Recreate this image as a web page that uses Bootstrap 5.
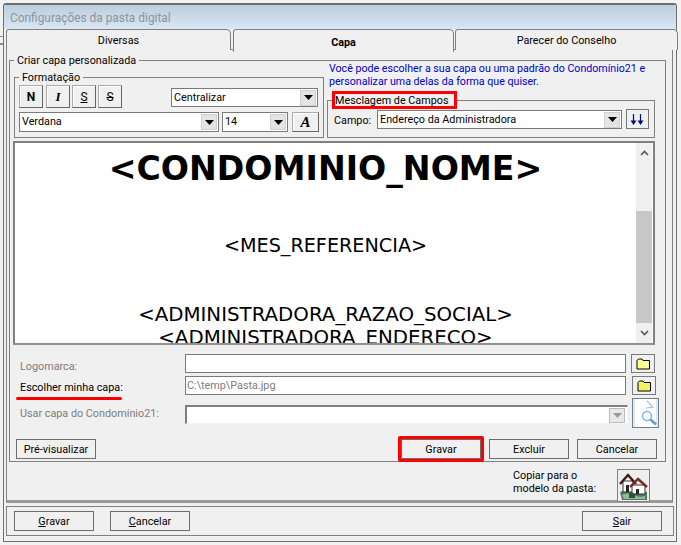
<!doctype html>
<html lang="pt-BR">
<head>
<meta charset="utf-8">
<title>Configurações da pasta digital</title>
<link href="https://cdn.jsdelivr.net/npm/bootstrap@5.3.0/dist/css/bootstrap.min.css" rel="stylesheet">
<style>
html,body{margin:0;width:681px;height:545px;overflow:hidden;background:#f2f2f2;}
body{font-family:Roboto,"Liberation Sans",sans-serif;font-size:10.800px;line-height:13px;color:#000;}
.win{box-sizing:border-box;margin:3px 0 0 3px;width:674px;height:539px;background:#f0f0f0;border:1px solid #6f6f6f;border-top-width:2px;padding-left:2px;border-top-right-radius:3px;border-top-left-radius:3px;}
.ttl{height:24px;margin-left:-2px;background:linear-gradient(#bccddc,#d9e7f4);color:#8c949b;font-size:11.900px;line-height:26px;padding-left:6px;}
.tabs{height:21px;width:672px;gap:1px;position:relative;z-index:2;}
.wtab{box-sizing:border-box;height:21px;border:1px solid #808080;border-bottom:0;border-top-right-radius:5px;border-top-left-radius:3px;line-height:22px;text-align:center;padding:0;background:#f0f0f0;color:#000;}
.wtab.sel{height:23px;margin-left:1px;font-weight:700;line-height:25px;border-color:#808080;}
.w-div{width:225px}.w-cap{width:221px}.w-par{width:223px}
.tpanel{box-sizing:border-box;width:667px;height:454px;margin-top:-1px;border:1px solid #808080;border-bottom:3px solid #999;padding:10px 0 0 2px;}
.grp{box-sizing:border-box;position:relative;border:1px solid #808080;}
.lgd{position:absolute;left:4px;top:-7px;background:#f0f0f0;padding:0 3px;white-space:nowrap;line-height:13px;}
.outer{width:657px;height:402px;padding:0 7px 0 4px;}
.fmt{width:310px;height:61px;margin-top:16px;padding:7px 4px 0;flex:none;}
.rcol{margin-left:3px;width:328px;flex:none;color:#0000c8;padding-top:1px;}
.rcol p{margin:0 0 0 2px;line-height:13px;white-space:nowrap;font-size:10.650px;}
.merge{height:38px;margin-top:12px;color:#000;padding:9px 5px 0 6px;}
.redbox{position:absolute;left:4px;top:-10px;width:125px;height:18px;border:3px solid #f00;overflow:hidden;line-height:13px;background:#f0f0f0;white-space:nowrap;}
.fbtn{box-sizing:border-box;width:24px;height:23px;padding:0;border:1px solid;border-color:#aaa #666 #666 #aaa;border-radius:0;background:#f0f0f0;line-height:20px;color:#000;font-weight:700;font-size:12px;box-shadow:inset 1px 1px 0 #fff;}
.fbtn.ser{font-family:"Liberation Serif",serif;font-style:italic;font-size:13px;}
.fbtn.thin{font-weight:400;}
.gap3{margin-right:3px}.gap2{margin-right:2px}
.fbtn.afont{width:27px;height:20px;margin-left:4px;font-size:15px;line-height:18px;font-weight:700;}
.fbtn.down{width:23px;height:20px;margin:-1px 0 0 4px;border-color:#777;box-shadow:none;}
.combo{box-sizing:border-box;border:1px solid #7a7a7a;background:#fff;height:20px;line-height:20px;padding-left:2px;align-items:center;white-space:nowrap;}
.combo .cap{flex:1 1 auto;overflow:hidden;}
.c-align{width:147px;height:19px;margin-top:3px;margin-right:1px;}
.c-font{width:200px}.c-size{width:66px;margin-left:3px}.c-camp{width:246px;height:19px}
.mrow2{margin-top:4px}
.camp{width:43px;line-height:21px;flex:none}
.arr{flex:none;width:16px;height:16px;margin-right:1px;background:#e4e4e4;border:1px solid #d0d0d0;display:flex;align-items:center;justify-content:center;}
.editor{box-sizing:border-box;width:642px;height:204px;margin:3px 0 0 -1px;border:2px solid #808080;border-bottom-color:#909090;background:#fff;overflow:hidden;font-family:"DejaVu Sans",sans-serif;}
.etext{flex:1 1 auto;text-align:center;overflow:hidden;color:#000;white-space:nowrap;}
.big{font-size:33.200px;font-weight:700;line-height:38px;margin-top:7px;}
.mid{font-size:19.800px;line-height:23px;}
.m1{margin-top:46px;font-size:19.200px;}
.m2{margin-top:46px;}
.sbar{flex:none;width:16px;margin-right:1px;background:#f0f0f0;}
.sarr{height:20px;align-items:center;justify-content:center;}
.thumb{height:112px;margin-top:48px;background:#c8c8c8;}
.frow{align-items:flex-start;margin-top:3px;}
.frow.first{margin-top:9px;}
.flab{width:171px;padding-left:6px;flex:none;color:#7d7d7d;line-height:19px;}
.flab.l1{margin-top:3px}
.flab.l2{margin-top:2px;color:#000;position:relative;}
.flab.l3{margin-top:6px}
.redline{position:absolute;left:2px;top:19px;width:106px;height:2.500px;background:#f00;border-radius:2px;}
.field{box-sizing:border-box;width:441px;height:19px;border:1px solid #7a7a7a;background:#fff;color:#7d7d7d;line-height:17px;padding-left:1px;flex:none;}
.frow .flab.l1,.frow .flab.l2,.frow .flab.l3{margin-bottom:-3px;}
.field.off{width:443px;border-width:2px 1px 1px 2px;border-color:#7f7f7f #f4f4f4 #f4f4f4 #7f7f7f;margin-top:7px;display:flex;justify-content:flex-end;align-items:center;padding:0 1px 0 0;}
.arr.dis{background:#e9e9e9;border-color:#bbb;height:15px;}
.fold{box-sizing:border-box;width:24px;height:19px;margin-left:5px;padding:0;border:1px solid #7a7a7a;background:#f0f0f0;border-radius:0;display:flex;align-items:center;justify-content:center;flex:none;}
.fold.f2{margin-left:6px}
.mag{box-sizing:border-box;width:27px;height:30px;margin-left:4px;padding:0;border:1px solid #6f7f8c;background:#fff;border-radius:0;flex:none;display:block;}
.wbtn{box-sizing:border-box;width:80px;height:20px;padding:1px 0 0;border:1px solid #6c6c6c;border-radius:0;background:#f0f0f0;color:#000;font-size:10.800px;line-height:17px;}
.wbtn:hover,.fbtn:hover{background:#f0f0f0;color:#000;border-color:#6c6c6c;}
.actions{margin-top:11px;padding-left:2px;width:643px;}
.hot{position:relative;margin:0 8px 0 auto;}
.hot::after{content:"";position:absolute;left:-4px;right:-4px;top:-4px;bottom:-4px;border:3px solid #f00;border-radius:2px;pointer-events:none;}
.excl{margin-right:8px}
.copyrow{width:664px;padding:7px 8px 0 0;justify-content:flex-end;}
.copytxt{width:104px;line-height:13px;}
.housebtn{box-sizing:border-box;width:33px;height:33px;margin-right:15px;border:1px solid #808080;background:#eee;padding:0;display:flex;align-items:center;justify-content:center;border-radius:0;}
.bottom{box-sizing:border-box;width:668px;height:30px;margin-top:3px;border:1px solid #808080;padding:4px 0 0 7px;}
.b-can{margin-left:16px}.b-sai{margin-left:392px}
.desk{position:absolute;left:0;top:36px;width:3px;height:9px;border-top:1px solid #888;border-bottom:2px solid #888;}
</style>
</head>
<body>
<div class="desk"></div>
<div class="win">
  <div class="ttl">Configurações da pasta digital</div>
  <div class="tabs d-flex">
    <div class="wtab w-div">Diversas</div>
    <div class="wtab sel w-cap">Capa</div>
    <div class="wtab w-par">Parecer do Conselho</div>
  </div>
  <div class="tpanel">
    <div class="grp outer">
      <div class="lgd">Criar capa personalizada</div>
      <div class="d-flex">
        <div class="grp fmt">
          <div class="lgd">Formatação</div>
          <div class="d-flex">
            <button class="btn fbtn gap3">N</button>
            <button class="btn fbtn ser gap2">I</button>
            <button class="btn fbtn thin gap2"><u>S</u></button>
            <button class="btn fbtn thin"><s>S</s></button>
            <div class="d-flex combo ms-auto c-align">
              <span class="cap">Centralizar</span>
              <span class="arr"><svg width="9" height="5" viewBox="0 0 9 5"><path d="M0 0h9L4.500 5z" fill="#000"/></svg></span>
            </div>
          </div>
          <div class="d-flex mrow2">
            <div class="d-flex combo c-font">
              <span class="cap">Verdana</span>
              <span class="arr"><svg width="9" height="5" viewBox="0 0 9 5"><path d="M0 0h9L4.500 5z" fill="#000"/></svg></span>
            </div>
            <div class="d-flex combo c-size">
              <span class="cap">14</span>
              <span class="arr"><svg width="9" height="5" viewBox="0 0 9 5"><path d="M0 0h9L4.500 5z" fill="#000"/></svg></span>
            </div>
            <button class="btn fbtn ser afont">A</button>
          </div>
        </div>
        <div class="rcol">
          <p>Você pode escolher a sua capa ou uma padrão do Condomínio21 e</p>
          <p>personalizar uma delas da forma que quiser.</p>
          <div class="grp merge">
            <div class="redbox">Mesclagem de Campos</div>
            <div class="d-flex">
              <span class="camp">Campo:</span>
              <div class="d-flex combo c-camp">
                <span class="cap">Endereço da Administradora</span>
                <span class="arr"><svg width="9" height="5" viewBox="0 0 9 5"><path d="M0 0h9L4.500 5z" fill="#000"/></svg></span>
              </div>
              <button class="btn fbtn down d-flex align-items-center justify-content-center" aria-label="Inserir">
                <svg width="17" height="11" viewBox="0 0 17 11" fill="none" stroke="#00107a" stroke-width="1.200"><path d="M4.500 0v9M11.500 0v9"/><path d="M1.500 6.500h6L4.500 11zM8.500 6.500h6l-3 4.500z" fill="#00107a" stroke="none"/></svg>
              </button>
            </div>
          </div>
        </div>
      </div>
      <div class="editor d-flex">
        <div class="etext">
          <div class="big">&lt;CONDOMINIO_NOME&gt;</div>
          <div class="mid m1">&lt;MES_REFERENCIA&gt;</div>
          <div class="mid m2">&lt;ADMINISTRADORA_RAZAO_SOCIAL&gt;</div>
          <div class="mid">&lt;ADMINISTRADORA_ENDERECO&gt;</div>
        </div>
        <div class="sbar d-flex flex-column">
          <div class="sarr d-flex"><svg width="9" height="6" viewBox="0 0 9 6" fill="none" stroke="#555" stroke-width="1.600"><path d="M1 5l3.500-3.500L8 5"/></svg></div>
          <div class="thumb"></div>
          <div class="sarr d-flex mt-auto"><svg width="9" height="6" viewBox="0 0 9 6" fill="none" stroke="#555" stroke-width="1.600"><path d="M1 1l3.500 3.500L8 1"/></svg></div>
        </div>
      </div>
      <div class="d-flex frow first">
        <div class="flab l1">Logomarca:</div>
        <div class="field"></div>
        <button class="btn fold" aria-label="Abrir"><svg width="15" height="12" viewBox="0 0 15 12"><path d="M1 11V2.500L2.500 1H6l1 1.500h6.500V11z" fill="#fdfd90" stroke="#000"/></svg></button>
      </div>
      <div class="d-flex frow">
        <div class="flab l2">Escolher minha capa:<span class="redline"></span></div>
        <div class="field">C:\temp\Pasta.jpg</div>
        <button class="btn fold f2" aria-label="Abrir"><svg width="15" height="12" viewBox="0 0 15 12"><path d="M1 11V2.500L2.500 1H6l1 1.500h6.500V11z" fill="#f5f060" stroke="#000"/></svg></button>
      </div>
      <div class="d-flex frow">
        <div class="flab l3">Usar capa do Condomínio21:</div>
        <div class="field off"><span class="arr dis"><svg width="9" height="5" viewBox="0 0 9 5"><path d="M0 0h9L4.500 5z" fill="#999"/></svg></span></div>
        <button class="btn mag" aria-label="Visualizar"><svg width="25" height="28" viewBox="0 0 25 28" fill="none"><path d="M1 0v28M24 0v28" stroke="#cfe0f0" stroke-width="1.400"/><path d="M14 2l6 6-7 1" stroke="#9cc0e4" stroke-width="1.200"/><circle cx="14" cy="17" r="4.500" stroke="#8cb4dc" stroke-width="1.500"/><path d="M17.500 20.500l5.500 5" stroke="#5f9ad2" stroke-width="2.600"/></svg></button>
      </div>
      <div class="d-flex actions">
        <button class="btn wbtn">Pré-visualizar</button>
        <button class="btn wbtn hot">Gravar</button>
        <button class="btn wbtn excl">Excluir</button>
        <button class="btn wbtn">Cancelar</button>
      </div>
    </div>
    <div class="copyrow d-flex">
      <div class="copytxt">Copiar para o<br>modelo da pasta:</div>
      <button class="btn housebtn" aria-label="Copiar">
        <svg width="31" height="31" viewBox="0 0 31 31">
          <path d="M2 22q6-3 13-2t14 2v8H4z" fill="#4d7a5a"/>
          <path d="M5 11h10v11H5z" fill="#fff" stroke="#333"/>
          <path d="M14 15h13v9H14z" fill="#fff" stroke="#333"/>
          <path d="M2 14L10 5l8 9" fill="none" stroke="#3c1c1a" stroke-width="2.400"/>
          <path d="M12 17l8-8 9 8" fill="none" stroke="#7c2a22" stroke-width="2.400"/>
          <path d="M8 15h3v7H8zM18 19h3v5h-3z" fill="#262626"/>
          <path d="M4 25q5-3 11 0t12 1v3H6z" fill="#9ab4a2"/>
          <path d="M11 24q3-3 6 0v4h-6z" fill="#1f5a34"/>
        </svg>
      </button>
    </div>
  </div>
  <div class="bottom d-flex">
    <button class="btn wbtn"><u>G</u>ravar</button>
    <button class="btn wbtn b-can"><u>C</u>ancelar</button>
    <button class="btn wbtn b-sai"><u>S</u>air</button>
  </div>
</div>
<script src="https://cdn.jsdelivr.net/npm/bootstrap@5.3.0/dist/js/bootstrap.bundle.min.js"></script>
</body>
</html>
